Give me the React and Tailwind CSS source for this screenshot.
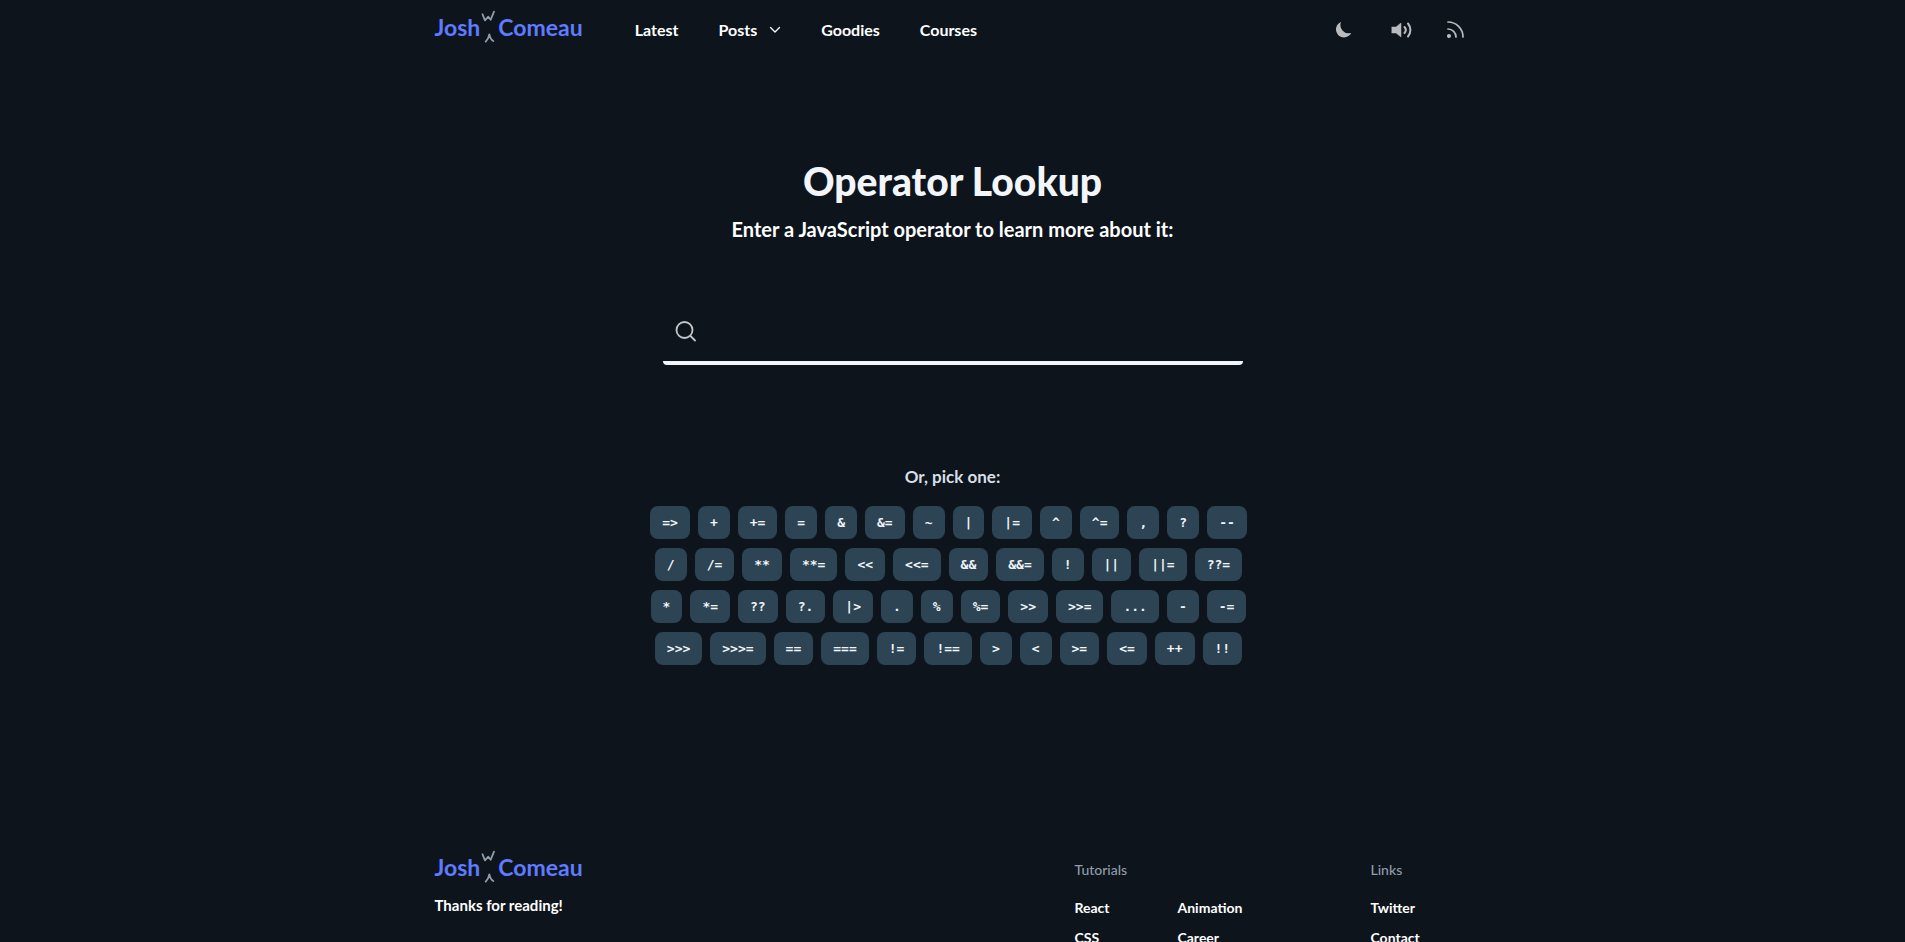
import React from 'react';

const operators = [
  '=>', '+', '+=', '=', '&', '&=', '~', '|', '|=', '^', '^=', ',', '?', '--',
  '/', '/=', '**', '**=', '<<', '<<=', '&&', '&&=', '!', '||', '||=', '??=',
  '*', '*=', '??', '?.', '|>', '.', '%', '%=', '>>', '>>=', '...', '-', '-=',
  '>>>', '>>>=', '==', '===', '!=', '!==', '>', '<', '>=', '<=', '++', '!!',
];

function Logo() {
  return (
    <a href="#home" aria-label="Josh W Comeau" className="flex items-start text-[23px] leading-[34px] font-bold text-[#5f7bff]">
      <span>Josh</span>
      <svg width="18" height="40" viewBox="0 0 18 40" fill="none" stroke="#8f9ca9" strokeWidth="1.8" strokeLinecap="round" strokeLinejoin="round" aria-hidden="true">
        <path d="M2.500 4.300 5 10.300 8.300 6.700 10.700 9.700 14 1.700" />
        <path d="M5.700 31.700C7.300 30 8.700 27.500 9.300 24.300 10 27.500 11.300 30 13.300 31" />
      </svg>
      <span>Comeau</span>
    </a>
  );
}

function Header() {
  return (
    <header className="mx-auto flex h-[60px] w-full max-w-[1100px] items-center px-8">
      <Logo />
      <nav className="ml-[52px] flex items-center gap-10 text-base leading-6 font-bold text-white">
        <a href="#latest">Latest</a>
        <button type="button" className="flex items-center gap-3">
          Posts
          <svg width="12" height="8" viewBox="0 0 12 8" fill="none" stroke="currentColor" strokeWidth="1.300" strokeLinecap="round" strokeLinejoin="round" aria-hidden="true">
            <path d="M1.500 1.500 6 6 10.500 1.500" />
          </svg>
        </button>
        <a href="#goodies">Goodies</a>
        <a href="#courses">Courses</a>
      </nav>
      <div className="ml-auto flex items-center gap-8 pr-1.5 text-[#b9bbbd]">
        <button type="button" aria-label="Toggle dark mode">
          <svg width="24" height="24" viewBox="0 0 24 24" fill="currentColor" aria-hidden="true">
            <path d="M8 4A8 8 0 1 0 18.200 14.900 8.300 8.300 0 0 1 8 4Z" />
          </svg>
        </button>
        <button type="button" aria-label="Toggle sound">
          <svg width="24" height="24" viewBox="0 0 24 24" fill="none" stroke="currentColor" strokeWidth="2" strokeLinecap="round" aria-hidden="true">
            <path d="M3 9h4l5-4v14l-5-4H3Z" fill="currentColor" strokeWidth="0.500" />
            <path d="M15.500 9a4.500 4.500 0 0 1 0 6M19 5.500a10 10 0 0 1 0 13" />
          </svg>
        </button>
        <a href="#rss" aria-label="RSS feed">
          <svg width="20" height="20" viewBox="0 0 20 20" fill="none" stroke="currentColor" strokeWidth="1.700" strokeLinecap="round" aria-hidden="true">
            <path d="M3 9a8 8 0 0 1 8 8M3 2a15 15 0 0 1 15 15" />
            <circle cx="4" cy="16" r="1.200" fill="currentColor" />
          </svg>
        </a>
      </div>
    </header>
  );
}

function FooterList({ items }) {
  return (
    <ul className="flex flex-col gap-2">
      {items.map((item) => (
        <li key={item}><a href={'#' + item.toLowerCase()}>{item}</a></li>
      ))}
    </ul>
  );
}

export default function App() {
  return (
    <div className="min-h-screen bg-[#0d141c] font-['Lato',sans-serif] text-white">
      <Header />
      <main className="flex flex-col items-center px-8 pt-[95px]">
        <h1 className="text-[39px] leading-[52px] font-black text-[#f2f5f9]">Operator Lookup</h1>
        <p className="mt-2 text-xl leading-7 font-bold">Enter a JavaScript operator to learn more about it:</p>
        <label htmlFor="operator" className="mt-[52px] flex h-[70px] w-full max-w-[580px] items-center rounded-b border-b-4 border-[#f2f5f9] pt-2 pl-3">
          <svg width="22" height="24" viewBox="0 0 22 24" fill="none" stroke="#c4c6c8" strokeWidth="1.800" strokeLinecap="round" aria-hidden="true">
            <circle cx="9.500" cy="10" r="8" />
            <path d="m15.500 16 4.500 4.500" />
          </svg>
          <input id="operator" type="text" aria-label="Operator" className="ml-3 h-full min-w-0 flex-1 bg-transparent text-2xl outline-none" />
        </label>
        <h2 className="mt-[100px] text-[17px] leading-6 font-bold text-[#d9dfe7]">Or, pick one:</h2>
        <div className="mt-[17px] flex w-full max-w-[608px] flex-wrap justify-center gap-y-[9px]">
          {operators.map((operator) => (
            <button key={operator} type="button" className="mr-2 h-[33px] rounded-lg bg-[#2c4454] px-3 font-['DejaVu_Sans_Mono',monospace] text-[13px] leading-5 font-bold text-[#f2f5f9]">
              {operator}
            </button>
          ))}
        </div>
      </main>
      <footer className="mx-auto mt-[185px] flex w-full max-w-[1100px] px-8 pb-8 text-sm leading-[22px] font-bold">
        <div className="flex-1">
          <Logo />
          <p className="mt-1 text-[15px]">Thanks for reading!</p>
        </div>
        <section className="mt-[9px] w-[296px]">
          <h3 className="mb-4 font-medium text-[#8f9ca9]">Tutorials</h3>
          <div className="flex">
            <div className="w-[103px]"><FooterList items={['React', 'CSS']} /></div>
            <FooterList items={['Animation', 'Career']} />
          </div>
        </section>
        <section className="mt-[9px] w-[100px]">
          <h3 className="mb-4 font-medium text-[#8f9ca9]">Links</h3>
          <FooterList items={['Twitter', 'Contact']} />
        </section>
      </footer>
    </div>
  );
}
